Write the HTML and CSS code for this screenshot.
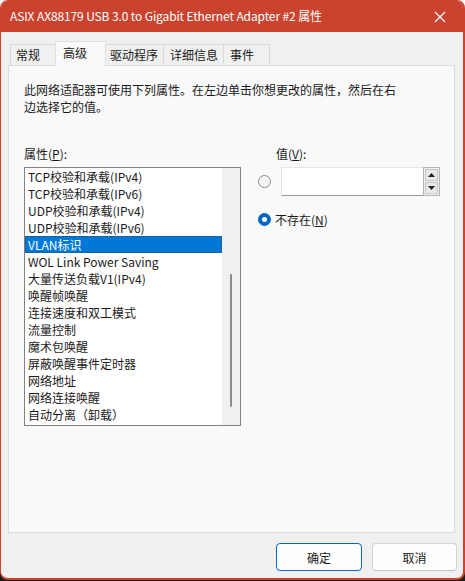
FILE: index.html
```html
<!DOCTYPE html>
<html lang="zh-CN">
<head>
<meta charset="utf-8">
<title>属性</title>
<link rel="stylesheet" href="styles.css">
</head>
<body>
<div class="window">
  <div class="titlebar">
    <span class="title">ASIX AX88179 USB 3.0 to Gigabit Ethernet Adapter #2 属性</span>
    <span class="close">
      <svg width="12" height="12" viewBox="0 0 12 12"><path d="M1 1L11 11M11 1L1 11" stroke="#fff" stroke-width="1.1" fill="none"/></svg>
    </span>
  </div>
  <div class="content">
    <div class="tabs">
      <div class="tab t1">常规</div>
      <div class="tab t2 selected">高级</div>
      <div class="tab t3">驱动程序</div>
      <div class="tab t4">详细信息</div>
      <div class="tab t5">事件</div>
    </div>
    <div class="panel">
      <p class="desc">此网络适配器可使用下列属性。在左边单击你想更改的属性，然后在右边选择它的值。</p>
      <div class="cols">
        <div class="leftcol">
          <div class="label">属性(<u>P</u>):</div>
          <div class="listbox">
            <div class="rows">
              <div class="row">TCP校验和承载(IPv4)</div>
              <div class="row">TCP校验和承载(IPv6)</div>
              <div class="row">UDP校验和承载(IPv4)</div>
              <div class="row">UDP校验和承载(IPv6)</div>
              <div class="row sel">VLAN标识</div>
              <div class="row">WOL Link Power Saving</div>
              <div class="row">大量传送负载V1(IPv4)</div>
              <div class="row">唤醒帧唤醒</div>
              <div class="row">连接速度和双工模式</div>
              <div class="row">流量控制</div>
              <div class="row">魔术包唤醒</div>
              <div class="row">屏蔽唤醒事件定时器</div>
              <div class="row">网络地址</div>
              <div class="row">网络连接唤醒</div>
              <div class="row">自动分离（卸载）</div>
            </div>
            <div class="scrollbar"><div class="thumb"></div></div>
          </div>
        </div>
        <div class="rightcol">
          <div class="label vlabel">值(<u>V</u>):</div>
          <div class="valrow">
            <span class="radio"></span>
            <div class="edit">
              <div class="editfield"></div>
              <div class="spin">
                <div class="spinbtn"><svg width="7" height="4" viewBox="0 0 7 4"><path d="M0 4L3.5 0L7 4Z" fill="#222"/></svg></div>
                <div class="spinbtn"><svg width="7" height="4" viewBox="0 0 7 4"><path d="M0 0L3.5 4L7 0Z" fill="#222"/></svg></div>
              </div>
            </div>
          </div>
          <div class="nonerow">
            <span class="radio checked"></span>
            <span class="nonelabel">不存在(<u>N</u>)</span>
          </div>
        </div>
      </div>
    </div>
    <div class="buttons">
      <button class="btn default">确定</button>
      <button class="btn">取消</button>
    </div>
  </div>
</div>
</body>
</html>
```
FILE: styles.css
```css
html, body {
  margin: 0;
  padding: 0;
}
body {
  width: 465px;
  height: 581px;
  background: linear-gradient(#ffffff 0 50%, #1c1c1c 50%);
  font-family: "Noto Sans CJK SC", sans-serif;
  font-size: 12px;
  color: #1a1a1a;
}
.window {
  box-sizing: border-box;
  width: 465px;
  height: 580px;
  background: #f0f0f0;
  border: 1px solid #c9432e;
  border-bottom-width: 2px;
  border-right-width: 2px;
  border-radius: 8px;
  overflow: hidden;
  display: flex;
  flex-direction: column;
}
.titlebar {
  height: 30px;
  flex: none;
  background: #c9432e;
  color: #fff;
  display: flex;
  align-items: center;
  padding-left: 9px;
  padding-bottom: 1px;
}
.title {
  font-size: 12px;
  line-height: 16px;
  letter-spacing: -0.12px;
}
.close {
  margin-left: auto;
  width: 46px;
  display: flex;
  justify-content: center;
  align-items: center;
  padding-top: 1px;
}
.content {
  padding: 9px 0 0 7px;
  display: flex;
  flex-direction: column;
}
.tabs {
  display: flex;
  align-items: flex-end;
  padding-left: 2px;
  height: 24px;
  position: relative;
  z-index: 1;
}
.tab {
  box-sizing: border-box;
  height: 21px;
  line-height: 19px;
  border: 1px solid #d9d9d9;
  border-bottom: none;
  border-left: none;
  background: #f0f0f0;
  padding-left: 5px;
  color: #1a1a1a;
}
.t1 { width: 46px; border-left: 1px solid #d9d9d9; }
.t2 { width: 51px; padding-left: 7px; }
.t3 { width: 58px; padding-left: 4px; }
.t4 { width: 60px; padding-left: 6px; }
.t5 { width: 46px; padding-left: 6px; }
.tab.selected {
  height: 25px;
  line-height: 21px;
  background: #f9f9f9;
  border-color: #e0e0e0;
  border-left: 1px solid #e0e0e0;
  margin-bottom: -1px;
  margin-left: -1px;
}
.panel {
  box-sizing: border-box;
  width: 447px;
  height: 468px;
  background: #f9f9f9;
  border: 1px solid #dcdcdc;
  padding: 15px 0 0 15px;
}
.desc {
  margin: 0;
  width: 378px;
  line-height: 17px;
}
.cols {
  display: grid;
  grid-template-columns: 217px 1fr;
  column-gap: 17px;
  margin-top: 30px;
}
.label {
  line-height: 17px;
  height: 17px;
  margin-bottom: 5px;
}
.vlabel {
  padding-left: 18px;
}
.listbox {
  box-sizing: border-box;
  width: 217px;
  height: 259px;
  border: 1px solid #828282;
  background: #fff;
  display: flex;
}
.rows {
  flex: 1;
  overflow: hidden;
}
.row {
  height: 17px;
  line-height: 18px;
  padding-left: 3px;
  white-space: nowrap;
  color: #1a1a1a;
}
.row.sel {
  background: #0078d7;
  color: #fff;
  outline: 1px dotted #3a4a5a;
  outline-offset: -1px;
}
.scrollbar {
  width: 18px;
  flex: none;
  background: #f0f0f0;
  display: flex;
  justify-content: center;
  padding-top: 106px;
  box-sizing: border-box;
}
.thumb {
  width: 2px;
  height: 133px;
  background: #8a8a8a;
  border-radius: 1px;
}
.valrow {
  display: flex;
  align-items: center;
  height: 29px;
}
.radio {
  box-sizing: border-box;
  width: 13px;
  height: 13px;
  border-radius: 50%;
  border: 1px solid #8a8a8a;
  background: #f6f6f6;
  flex: none;
  display: inline-block;
}
.radio.checked {
  background: #0067c0;
  border-color: #0067c0;
  position: relative;
}
.radio.checked::after {
  content: "";
  position: absolute;
  left: 3px;
  top: 3px;
  width: 5px;
  height: 5px;
  border-radius: 50%;
  background: #fff;
}
.edit {
  margin-left: 10px;
  box-sizing: border-box;
  width: 159px;
  height: 29px;
  display: flex;
  background: #fff;
  border: 1px solid #e6e6e6;
  border-bottom-color: #9a9a9a;
  border-right: none;
}
.editfield {
  flex: 1;
}
.spin {
  box-sizing: border-box;
  width: 17px;
  flex: none;
  border: 1px solid #b5b5b5;
  background: #f0f0f0;
  display: flex;
  flex-direction: column;
  padding: 1px;
  gap: 1px;
  margin-top: -1px;
  height: 29px;
}
.spinbtn {
  flex: 1;
  background: #e8e8e8;
  border: 1px solid #c8c8c8;
  display: flex;
  align-items: center;
  justify-content: center;
}
.nonerow {
  display: flex;
  align-items: center;
  margin-top: 16px;
  height: 14px;
}
.nonelabel {
  margin-left: 4px;
  line-height: 17px;
}
.buttons {
  display: flex;
  justify-content: flex-end;
  gap: 10px;
  padding-right: 6px;
  margin-top: 10px;
}
.btn {
  box-sizing: border-box;
  width: 85px;
  height: 28px;
  font-family: "Noto Sans CJK SC", sans-serif;
  font-size: 12px;
  color: #1a1a1a;
  background: #fdfdfd;
  border: 1px solid #d4d4d4;
  border-bottom-color: #c2c2c2;
  border-radius: 4px;
  padding: 0;
}
.btn.default {
  border: 1px solid #0067c0;
  width: 86px;
}
```
